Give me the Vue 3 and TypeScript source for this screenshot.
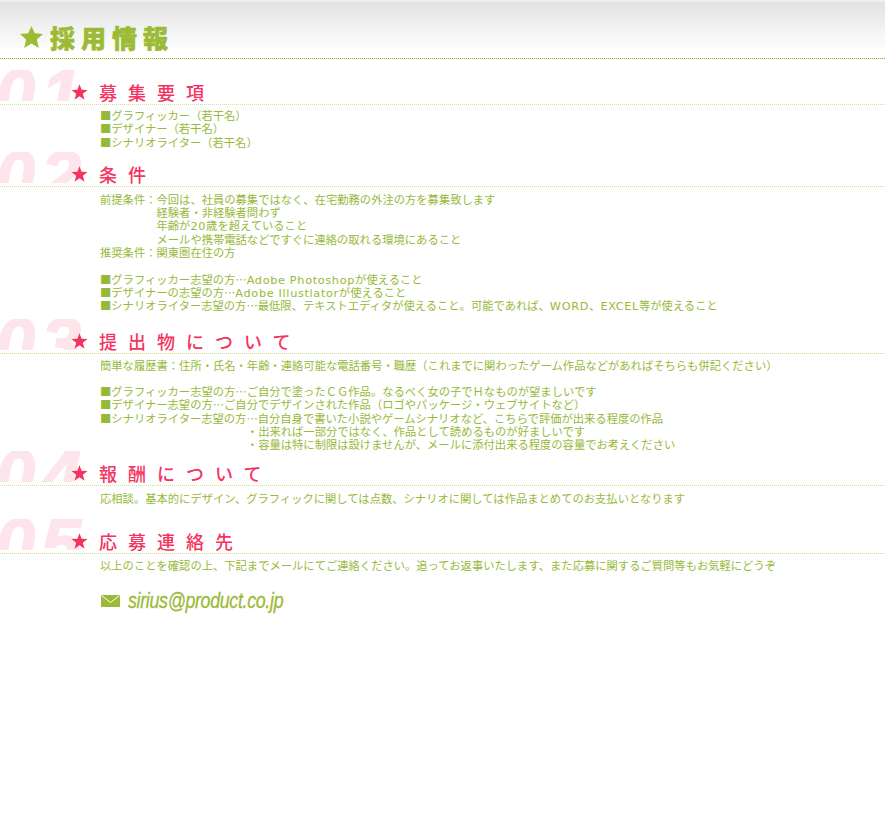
<script setup lang="ts">
interface Seg {
  text: string
  latin: boolean
}
interface Section {
  no: string
  title: string
  cls: string
  lines: string[]
}
const sections: Section[] = [
  { no: '01', title: '募集要項', cls: 's1', lines: ['■グラフィッカー（若干名）', '■デザイナー（若干名）', '■シナリオライター（若干名）'] },
  { no: '02', title: '条件', cls: 's2', lines: [
    '前提条件：今回は、社員の募集ではなく、在宅勤務の外注の方を募集致します',
    '　　　　　経験者・非経験者問わず',
    '　　　　　年齢が20歳を超えていること',
    '　　　　　メールや携帯電話などですぐに連絡の取れる環境にあること',
    '推奨条件：関東圏在住の方',
    '',
    '■グラフィッカー志望の方…Adobe Photoshopが使えること',
    '■デザイナーの志望の方…Adobe Illustlatorが使えること',
    '■シナリオライター志望の方…最低限、テキストエディタが使えること。可能であれば、WORD、EXCEL等が使えること',
  ] },
  { no: '03', title: '提出物について', cls: 's3', lines: [
    '簡単な履歴書：住所・氏名・年齢・連絡可能な電話番号・職歴（これまでに関わったゲーム作品などがあればそちらも併記ください）',
    '',
    '■グラフィッカー志望の方…ご自分で塗ったＣＧ作品。なるべく女の子でＨなものが望ましいです',
    '■デザイナー志望の方…ご自分でデザインされた作品（ロゴやパッケージ・ウェブサイトなど）',
    '■シナリオライター志望の方…自分自身で書いた小説やゲームシナリオなど、こちらで評価が出来る程度の作品',
    '　　　　　　　　　　　　　・出来れば一部分ではなく、作品として読めるものが好ましいです',
    '　　　　　　　　　　　　　・容量は特に制限は設けませんが、メールに添付出来る程度の容量でお考えください',
  ] },
  { no: '04', title: '報酬について', cls: 's4', lines: ['応相談。基本的にデザイン、グラフィックに関しては点数、シナリオに関しては作品まとめてのお支払いとなります'] },
  { no: '05', title: '応募連絡先', cls: 's5', lines: ['以上のことを確認の上、下記までメールにてご連絡ください。追ってお返事いたします、また応募に関するご質問等もお気軽にどうぞ'] },
]

function segments(line: string): Seg[] {
  return line
    .split(/([A-Za-z0-9 ]+)/)
    .filter((t) => t.length > 0)
    .map((t) => ({ text: t, latin: /^[A-Za-z0-9 ]+$/.test(t) }))
}
</script>

<template>
  <div class="page">
    <header class="top">
      <svg class="top-star" width="23" height="22" viewBox="0 0 24 23">
        <path d="M12 0 L15.4 7.6 L24 8.4 L17.6 14 L19.6 23 L12 18.4 L4.4 23 L6.4 14 L0 8.4 L8.6 7.6 Z" fill="#9cbb34" />
      </svg>
      <h1 class="top-title">採用情報</h1>
    </header>
    <section v-for="s in sections" :key="s.no" class="sec" :class="s.cls">
      <div class="head">
        <span class="no">{{ s.no }}</span>
        <svg class="star" width="17" height="16" viewBox="0 0 24 23">
          <path d="M12 0.5 L15 8.3 L23.5 8.7 L16.8 14 L19.2 22.5 L12 17.7 L4.8 22.5 L7.2 14 L0.5 8.7 L9 8.3 Z" fill="#f5335f" />
        </svg>
        <h2 class="title">{{ s.title }}</h2>
      </div>
      <div class="body">
        <p v-for="(l, i) in s.lines" :key="i" class="line">
          <template v-if="l"><span v-for="(g, j) in segments(l)" :key="j" :class="{ latin: g.latin }">{{ g.text }}</span></template>
          <template v-else>　</template>
        </p>
      </div>
    </section>
    <div class="mail">
      <svg class="env" width="19" height="12" viewBox="0 0 19 12">
        <rect width="19" height="12" fill="#9bbb38" />
        <path d="M0.5 0.5 L9.5 7.5 L18.5 0.5" fill="none" stroke="#fff" stroke-width="1" />
      </svg>
      <span class="addr">sirius@product.co.jp</span>
    </div>
  </div>
</template>

<style scoped>
.page {
  width: 885px;
  height: 822px;
  background: #fff;
  overflow: hidden;
  font-family: "Noto Sans CJK JP", "Liberation Sans", sans-serif;
}
.top {
  height: 56px;
  padding-top: 2px;
  display: flex;
  align-items: flex-end;
  gap: 8px;
  padding-left: 20px;
  background: linear-gradient(#f4f4f4 0, #e3e3e3 3px, #f3f3f3 30px, #fff 52px);
  border-bottom: 1px dotted #9bb51e;
}
.top-star {
  margin-bottom: 10px;
}
.top-title {
  margin: 0 0 6px -1px;
  font-size: 25px;
  line-height: 30px;
  font-weight: 900;
  letter-spacing: 6px;
  -webkit-text-stroke: 0.6px #9cbb34;
  color: #9cbb34;
  white-space: nowrap;
}
.head {
  position: relative;
  height: 35px;
  box-sizing: border-box;
  display: flex;
  align-items: flex-end;
  padding-left: 71px;
  border-bottom: 1px dotted #d5e08c;
}
.no {
  position: absolute;
  left: -5px;
  top: 0;
  height: 31px;
  overflow: hidden;
  font: italic 700 72px/51px "Liberation Sans", sans-serif;
  -webkit-text-stroke: 1.5px #fde5eb;
  color: #fde5eb;
  letter-spacing: 6px;
}
.star {
  position: relative;
  margin: 0 11px 4px 0;
}
.title {
  position: relative;
  margin: 0;
  font-size: 18px;
  line-height: 24px;
  height: 24px;
  font-weight: 500;
  letter-spacing: 11px;
  color: #f5335f;
  white-space: nowrap;
}
.body {
  padding: 6px 0 0 100px;
}
.line {
  margin: 0;
  height: 13.3px;
  font-size: 11.3px;
  line-height: 13.3px;
  color: #97b93a;
  white-space: nowrap;
}
.latin {
  font-family: "DejaVu Sans", sans-serif;
  line-height: 0;
  letter-spacing: 0.65px;
}
.s1 .head { margin-top: 11px; }
.s1 .body { padding-top: 4px; }
.s2 .head { margin-top: 3px; }
.s2 .body { padding-top: 6px; }
.s3 .head { margin-top: 6px; }
.s3 .body { padding-top: 5px; }
.s4 .head { margin-top: -1px; }
.s5 .head { margin-top: 14px; }
.s5 .body { padding-top: 5px; }
.mail {
  display: flex;
  align-items: center;
  gap: 8px;
  padding: 16px 0 0 101px;
}
.addr {
  font: italic 400 22px/26px "Liberation Sans", sans-serif;
  letter-spacing: -0.4px;
  -webkit-text-stroke: 0.3px #9bbb38;
  color: #9bbb38;
  transform: scaleX(0.81);
  transform-origin: left center;
}
</style>
